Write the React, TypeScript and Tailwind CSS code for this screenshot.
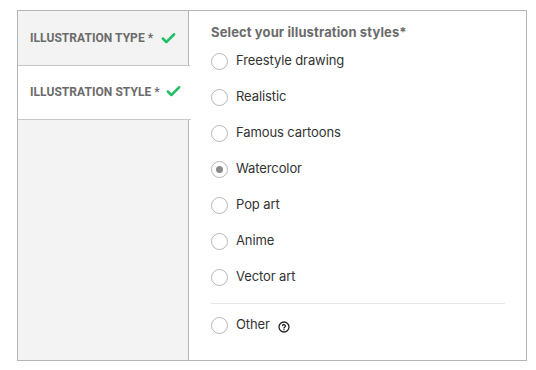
import { Check } from "lucide-react";

const options = [
  "Freestyle drawing",
  "Realistic",
  "Famous cartoons",
  "Watercolor",
  "Pop art",
  "Anime",
  "Vector art",
];

const Radio = ({ checked = false }: { checked?: boolean }) => (
  <span className="w-[17px] h-[17px] rounded-full border border-[#b5b5b5] bg-white flex items-center justify-center shrink-0">
    {checked && <span className="w-[7px] h-[7px] rounded-full bg-[#8a8a8a]" />}
  </span>
);

const App = () => {
  return (
    <div className="w-[536px] h-[370px] bg-white pt-[10px] pl-[17px] font-['Roboto',sans-serif]">
      <div className="w-[510px] h-[351px] border border-[#b4b4b4] flex">
        {/* Sidebar */}
        <div className="w-[171px] bg-[#f3f3f3] border-r border-[#b4b4b4] flex flex-col">
          <div className="h-[55px] flex items-center pl-[12px] gap-[7px] border-b border-[#c8c8c8] mr-[-2px]">
            <span className="text-[12px] font-bold text-[#6b6b6b] tracking-[0.05px]">ILLUSTRATION TYPE *</span>
            <Check className="w-[17px] h-[17px] text-[#1fbf63]" strokeWidth={3.5} />
          </div>
          <div className="h-[54px] flex items-center pb-[2px] pl-[12px] gap-[5px] bg-white border-b border-[#c8c8c8] mr-[-3px]">
            <span className="text-[12px] font-bold text-[#6b6b6b] tracking-[0.05px]">ILLUSTRATION STYLE *</span>
            <Check className="w-[17px] h-[17px] text-[#1fbf63]" strokeWidth={3.5} />
          </div>
        </div>

        {/* Content */}
        <div className="flex-1 pl-[22px] pr-[21px] pt-[13px] font-['Inter',sans-serif]">
          <div className="text-[13px] font-bold text-[#6b6b6b] leading-[16px] tracking-[0.12px]">Select your illustration styles*</div>
          <div className="flex flex-col mt-[3px]">
            {options.map((o) => (
              <label key={o} className="h-[36px] flex items-center gap-[8px] text-[13px] text-[#333] tracking-[-0.1px]">
                <Radio checked={o === "Watercolor"} />
                <span>{o}</span>
              </label>
            ))}
          </div>
          <div className="border-t border-[#e6e6e6] mt-[8px] pt-[10px]">
            <label className="h-[22px] flex items-center gap-[8px] text-[13px] text-[#333] tracking-[-0.1px]">
              <Radio />
              <span>Other</span>
              <svg width="12" height="12" viewBox="0 0 24 24" fill="none" stroke="#222" strokeWidth="2.6" strokeLinecap="round" strokeLinejoin="round" className="mt-[3px]">
                <circle cx="12" cy="12" r="10" />
                <path d="M9.1 9a3 3 0 0 1 5.8 1c0 2-3 2.5-3 4" />
                <path d="M12 17.5h.01" />
              </svg>
            </label>
          </div>
        </div>
      </div>
    </div>
  );
};

export default App;
